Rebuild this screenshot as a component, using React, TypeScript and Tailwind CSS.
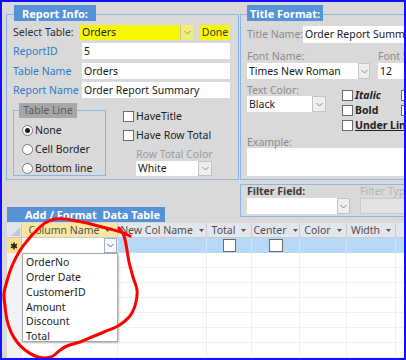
import React from "react";

const Chevron = ({ c = "#8a8a8a" }: { c?: string }) => (
  <svg width="7" height="5" viewBox="0 0 7 5">
    <path d="M0.5 1 L3.5 4 L6.5 1" fill="none" stroke={c} strokeWidth="1" />
  </svg>
);

const SortArrow = () => (
  <svg width="5" height="3" viewBox="0 0 5 3">
    <path d="M0 0 L5 0 L2.5 3 Z" fill="#555" />
  </svg>
);

function DropBtn({ w = "w-[14px]" }: { w?: string }) {
  return (
    <div className={`${w} h-full shrink-0 flex items-center justify-center bg-[#efefef] border border-[#c4c4c4]`}>
      <Chevron />
    </div>
  );
}

function Check({ size = "w-[11px] h-[11px]" }: { size?: string }) {
  return <div className={`${size} shrink-0 bg-white border border-[#6b6b6b]`} />;
}

function Radio({ on = false }: { on?: boolean }) {
  return (
    <div className="w-[11px] h-[11px] shrink-0 rounded-full bg-white border border-[#7a7a7a] flex items-center justify-center">
      {on && <div className="w-[5px] h-[5px] rounded-full bg-[#1a1a1a]" />}
    </div>
  );
}

function catmull(pts: number[][]) {
  let d = `M${pts[0][0]} ${pts[0][1]}`;
  for (let i = 0; i < pts.length - 1; i++) {
    const p0 = pts[i - 1] || pts[i];
    const p1 = pts[i];
    const p2 = pts[i + 1];
    const p3 = pts[i + 2] || p2;
    const c1 = [p1[0] + (p2[0] - p0[0]) / 6, p1[1] + (p2[1] - p0[1]) / 6];
    const c2 = [p2[0] - (p3[0] - p1[0]) / 6, p2[1] - (p3[1] - p1[1]) / 6];
    d += ` C${c1[0].toFixed(1)} ${c1[1].toFixed(1)} ${c2[0].toFixed(1)} ${c2[1].toFixed(1)} ${p2[0]} ${p2[1]}`;
  }
  return d;
}

const redPts = [
  [119, 228], [124, 236], [127, 250], [129, 262], [133, 277], [137, 290], [136, 302],
  [132, 313], [125, 321], [116, 327], [104, 332], [92, 337], [80, 342], [67, 346],
  [59, 351], [53, 356], [45, 358], [35, 356], [25, 350], [17, 342], [11, 332],
  [7, 320], [5, 306], [4, 294], [7, 281], [12, 266], [19, 252], [27, 241], [36, 231],
  [45, 223], [55, 219], [66, 219], [76, 221], [87, 223], [98, 226], [110, 229],
  [121, 232], [130, 236],
];

const cols = [15, 96, 89, 45, 48, 47, 49, 30];

export default function App() {
  return (
    <div className="relative w-[406px] h-[360px] overflow-hidden border-2 border-[#1212ff] bg-[#d9d9d9] font-['Noto_Sans',sans-serif] text-[10.5px] leading-none text-[#262626]">
      {/* Top panels */}
      <div className="flex pt-[3px] pl-[4px]">
        {/* Report Info */}
        <div className="flex flex-col w-[233px] shrink-0">
          <div className="relative z-10 ml-[8px] h-[16px] w-[82px] bg-[#5592d6] text-white font-bold text-[11px] flex items-center justify-center">
            Report Info:
          </div>
          <div className="-mt-[7px] h-[166px] border border-[#8db4e2] pt-[10px] pl-[6px]">
            <div className="flex items-center h-[15px]">
              <span className="w-[67px] text-[#303030] whitespace-nowrap">Select Table:</span>
              <div className="flex w-[113px] h-full bg-[#f8f800]">
                <span className="flex-1 pl-[2px] flex items-center text-[#1a1a1a]">Orders</span>
                <div className="w-[13px] h-full flex items-center justify-center border-l border-[#c9c98a] bg-[#eeee7a]">
                  <Chevron />
                </div>
              </div>
              <div className="ml-[7px] w-[30px] h-full bg-[#f8f800] flex items-center justify-center text-[#3a3a3a]">
                Done
              </div>
            </div>
            {[
              ["ReportID", "5", "mt-[3px]"],
              ["Table Name", "Orders", "mt-[4px]"],
              ["Report Name", "Order Report Summary", "mt-[3px]"],
            ].map(([l, v, m]) => (
              <div key={l} className={`flex items-center h-[16px] ${m}`}>
                <span className="w-[69px] text-[#2f7ac4] whitespace-nowrap">{l}</span>
                <div className="w-[148px] h-full bg-white pl-[2px] flex items-center text-[#1a1a1a] whitespace-nowrap">{v}</div>
              </div>
            ))}
            <div className="flex mt-[5px]">
              {/* Table Line group */}
              <div className="flex flex-col w-[93px] shrink-0">
                <div className="relative z-10 ml-[6px] w-[58px] h-[15px] bg-[#a6a6a6] text-[#5c5c5c] flex items-center justify-center whitespace-nowrap">
                  Table Line
                </div>
                <div className="-mt-[8px] h-[66px] border border-[#8db4e2] pt-[13px] pl-[8px] flex flex-col gap-[7px]">
                  {[
                    ["None", true],
                    ["Cell Border", false],
                    ["Bottom line", false],
                  ].map(([t, on]) => (
                    <div key={t as string} className="flex items-center h-[12px] gap-[2px] text-[#222] whitespace-nowrap">
                      <Radio on={on as boolean} />
                      <span>{t as string}</span>
                    </div>
                  ))}
                </div>
              </div>
              <div className="flex flex-col ml-[17px] pt-[8px]">
                <div className="flex items-center h-[11px] gap-[2px] text-[#222]">
                  <Check />
                  <span>HaveTitle</span>
                </div>
                <div className="flex items-center h-[11px] gap-[2px] mt-[8px] text-[#222] whitespace-nowrap">
                  <Check />
                  <span>Have Row Total</span>
                </div>
                <div className="ml-[13px] mt-[7px] h-[12px] flex items-center text-[#9c9c9c] whitespace-nowrap">Row Total Color</div>
                <div className="ml-[13px] mt-[1px] w-[76px] h-[15px] flex bg-white">
                  <span className="flex-1 pl-[2px] flex items-center text-[#1a1a1a]">White</span>
                  <DropBtn />
                </div>
              </div>
            </div>
          </div>
        </div>

        {/* Title Format */}
        <div className="flex flex-col ml-[1px] w-[200px] shrink-0">
          <div className="relative z-10 ml-[7px] h-[16px] w-[76px] bg-[#5592d6] text-white font-bold text-[11px] flex items-center justify-center whitespace-nowrap">
            Title Format:
          </div>
          <div className="-mt-[7px] h-[166px] border border-[#8db4e2] pt-[11px] pl-[6px] text-[#8c8c8c]">
            <div className="flex items-center h-[17px]">
              <span className="w-[56px] shrink-0 whitespace-nowrap">Title Name:</span>
              <div className="flex-1 h-full bg-white pl-[2px] flex items-center text-[#1a1a1a] whitespace-nowrap overflow-hidden">
                Order Report Summary
              </div>
            </div>
            <div className="flex mt-[7px]">
              <div className="flex flex-col w-[123px] shrink-0">
                <span className="h-[12px] flex items-center whitespace-nowrap">Font Name:</span>
                <div className="mt-[1px] h-[16px] flex bg-white">
                  <span className="flex-1 pl-[2px] flex items-center text-[#1a1a1a] whitespace-nowrap">Times New Roman</span>
                  <DropBtn w="w-[12px]" />
                </div>
              </div>
              <div className="flex flex-col ml-[8px] w-[60px]">
                <span className="h-[12px] flex items-center whitespace-nowrap">Font Size</span>
                <div className="mt-[1px] h-[16px] bg-white pl-[2px] flex items-center text-[#1a1a1a]">12</div>
              </div>
            </div>
            <div className="flex mt-[5px]">
              <div className="flex flex-col w-[79px] shrink-0">
                <span className="h-[12px] flex items-center whitespace-nowrap">Text Color:</span>
                <div className="h-[16px] flex bg-white">
                  <span className="flex-1 pl-[2px] flex items-center text-[#1a1a1a]">Black</span>
                  <DropBtn />
                </div>
              </div>
              <div className="flex flex-col ml-[16px] mt-[6px] gap-[4px] text-[#1e1e1e] font-bold">
                <div className="flex items-center h-[11px]">
                  <div className="flex items-center gap-[2px] w-[59px]">
                    <Check />
                    <span className="italic">Italic</span>
                  </div>
                  <Check />
                </div>
                <div className="flex items-center h-[11px]">
                  <div className="flex items-center gap-[2px] w-[59px]">
                    <Check />
                    <span>Bold</span>
                  </div>
                  <Check />
                </div>
                <div className="flex items-center h-[11px] gap-[2px]">
                  <Check />
                  <span className="underline whitespace-nowrap">Under Line</span>
                </div>
              </div>
            </div>
            <span className="mt-[5px] h-[12px] flex items-center">Example:</span>
            <div className="h-[28px] bg-white" />
          </div>
        </div>
      </div>

      {/* Middle: tab + filter */}
      <div className="flex h-[43px]">
        <div className="w-[238px] shrink-0 flex flex-col justify-end pl-[5px] pb-[1px]">
          <div className="w-[158px] h-[15px] bg-[#5592d6] text-white font-bold text-[11px] flex items-center pl-[18px] whitespace-nowrap">
            Add / Format&nbsp; Data Table
          </div>
        </div>
        <div className="mt-[4px] w-[200px] h-[33px] shrink-0 border border-[#8db4e2] pl-[6px] pt-[1px]">
          <div className="flex">
            <div className="flex flex-col w-[103px] shrink-0">
              <span className="h-[11px] flex items-center font-bold text-[#3c3c3c] whitespace-nowrap">Filter Field:</span>
              <div className="mt-[1px] h-[16px] flex bg-white">
                <span className="flex-1" />
                <DropBtn w="w-[13px]" />
              </div>
            </div>
            <div className="flex flex-col ml-[10px] w-[60px]">
              <span className="h-[11px] flex items-center text-[#b3b3b3] whitespace-nowrap">Filter Type</span>
              <div className="mt-[1px] h-[16px] bg-[#e3e3e3] border border-[#cacaca]" />
            </div>
          </div>
        </div>
      </div>

      {/* Datasheet */}
      <div className="relative ml-[5px] w-[420px]">
        {/* Header */}
        <div className="flex h-[15px] bg-[#e3e6eb] text-[#505050]">
          <div className="w-[15px] h-full border-r border-b border-[#c8ccd2] relative flex items-end justify-end">
            <svg width="9" height="9" viewBox="0 0 9 9" className="mb-[1px] mr-[1px]">
              <path d="M9 0 L9 9 L0 9 Z" fill="#c4c8cf" />
            </svg>
          </div>
          {["Column Name", "New Col Name", "Total", "Center", "Color", "Width", ""].map((h, i) => (
            <div
              key={i}
              style={{ width: cols[i + 1] }}
              className={`h-full shrink-0 border-r border-b border-[#c8ccd2] flex items-center justify-center gap-[6px] whitespace-nowrap ${i === 0 ? "bg-[#fbe7a2]" : ""}`}
            >
              {h && <span>{h}</span>}
              {h && <SortArrow />}
            </div>
          ))}
        </div>
        {/* New row */}
        <div className="flex h-[15px] bg-[#b8d8f7]">
          <div className="w-[15px] h-full bg-[#f9df8b] flex items-center justify-center border-r border-[#d6c27a]">
            <svg width="8" height="8" viewBox="0 0 8 8">
              <path d="M4 0.5 V7.5 M1 2.2 L7 5.8 M7 2.2 L1 5.8" stroke="#222" strokeWidth="1.6" />
            </svg>
          </div>
          <div className="w-[96px] h-full bg-white flex justify-end border-r border-[#d9e6f3]">
            <div className="w-[13px] h-full border border-[#9fb2c6] bg-[#f7f9fb] flex items-center justify-center">
              <Chevron c="#4d6f94" />
            </div>
          </div>
          <div className="w-[89px] h-full border-r border-[#d3e3f3]" />
          <div className="w-[45px] h-full border-r border-[#d3e3f3] flex items-center justify-center">
            <Check size="w-[13px] h-[13px]" />
          </div>
          <div className="w-[48px] h-full border-r border-[#d3e3f3] flex items-center justify-center">
            <Check size="w-[14px] h-[13px]" />
          </div>
          <div className="w-[47px] h-full border-r border-[#d3e3f3]" />
          <div className="w-[49px] h-full border-r border-[#d3e3f3]" />
        </div>
        {/* Empty rows */}
        {Array.from({ length: 7 }).map((_, r) => (
          <div key={r} className="flex h-[15px] bg-white">
            {cols.map((w, i) => (
              <div
                key={i}
                style={{ width: w }}
                className={`h-full shrink-0 border-r border-b border-[#efefef] ${i === 0 ? "bg-[#f1f2f5]" : ""}`}
              />
            ))}
          </div>
        ))}
        {/* Dropdown list */}
        <div className="absolute left-[15px] top-[30px] w-[96px] h-[89px] bg-white border border-[#a9a9a9] shadow-[1px_1px_2px_rgba(0,0,0,0.25)] pt-[1px] text-[#1e1e1e]">
          {["OrderNo", "Order Date", "CustomerID", "Amount", "Discount", "Total"].map((t) => (
            <div key={t} className="h-[14.8px] pl-[3px] flex items-center">
              {t}
            </div>
          ))}
        </div>
      </div>

      {/* Red annotation */}
      <svg className="absolute left-[-2px] top-[-2px] pointer-events-none" width="406" height="360" viewBox="0 0 406 360">
        <path d={catmull(redPts)} fill="none" stroke="#ff0000" strokeWidth="3" strokeLinecap="round" strokeLinejoin="round" />
      </svg>
    </div>
  );
}
